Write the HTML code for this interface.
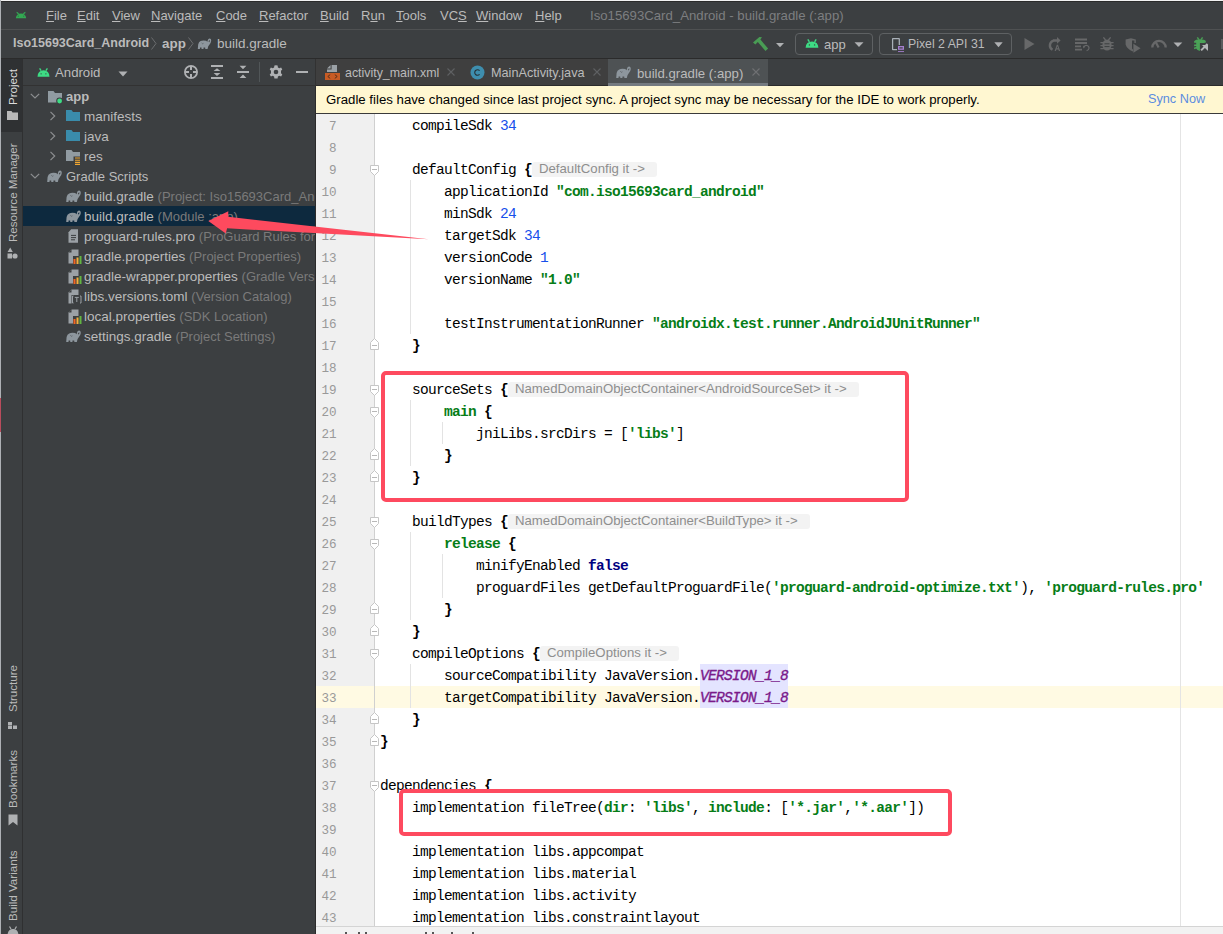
<!DOCTYPE html>
<html><head><meta charset="utf-8">
<style>
*{margin:0;padding:0;box-sizing:border-box}
html,body{width:1223px;height:934px;overflow:hidden;background:#3c3f41;font-family:"Liberation Sans",sans-serif;position:relative}
.a{position:absolute}
.t{position:absolute;white-space:nowrap;font-size:13px;line-height:15px;color:#bbbbbb}
.u{text-decoration:underline;text-underline-offset:1px}
svg{position:absolute;overflow:visible}
/* editor */
#ed{position:absolute;left:316px;top:114px;width:907px;height:812px;background:#fff;overflow:hidden}
#gut{position:absolute;left:0;top:0;width:58px;height:812px;background:#f0f0f0}
#gl{position:absolute;left:58px;top:0;width:1px;height:812px;background:#d0d0d0}
.ln{position:absolute;left:0;width:20.5px;margin-top:2px;text-align:right;font-family:"Liberation Mono",monospace;font-size:12.6px;line-height:22px;color:#999999}
.cl{position:absolute;left:64px;white-space:pre;font-family:"Liberation Mono",monospace;font-size:14.5px;letter-spacing:-0.7px;line-height:22px;color:#000;margin-top:1px}
.s{color:#067d17;font-weight:bold}
.n{color:#1750eb}
.k{color:#000080;font-weight:bold}
.f{color:#7a1a8a;font-style:italic;-webkit-text-stroke:0.35px #7a1a8a}
.h{position:absolute;height:15px;background:#f3f3f3;border-radius:3px;font-family:"Liberation Sans",sans-serif;font-size:13.2px;line-height:13px;color:#8e8e8e;padding-left:7px;padding-right:12px;white-space:nowrap}
</style></head><body>
<svg width="0" height="0" style="position:absolute"><defs>
<symbol id="ele" viewBox="0 0 15 12"><path d="M0.2 12 L0.6 7 Q1.2 4.2 3.2 3.4 Q5.6 2.4 9.2 3.1 L10.6 4.2 Q11 2.6 11.4 1.6 Q12.4 0.4 13.4 0.5 Q15 1 14.8 3 Q14.6 5.6 12.6 7.6 L11.6 9 L10.8 12 L8.4 12 L8.2 10.4 L6.5 10.4 L6.4 12 L4.3 12 L4.2 10.4 L2.6 10.4 L2.5 12 Z M11.9 3.9 Q12.3 2.4 13.5 2.5 Q13.3 3.8 12.7 4.5 Z" fill="#8d969d" fill-rule="evenodd"/><path d="M4.4 5.4 Q5.3 6.9 6.4 5.8" stroke="#5a6065" stroke-width="0.9" fill="none"/></symbol>
<symbol id="pg" viewBox="0 0 14 15"><path d="M0.5 3.5 L3.5 0.5 H10.5 V14.5 H0.5 Z" fill="#9ba1a6"/><path d="M0.5 3.5 H3.5 V0.5" fill="#3c3f41"/><path d="M0 3.3 L3.3 0" stroke="#3c3f41" stroke-width="0.9"/></symbol>
<symbol id="props" viewBox="0 0 14 15"><use href="#pg"/><rect x="5" y="7" width="9" height="8" fill="#3c3f41"/><rect x="5.5" y="10" width="2" height="5" fill="#f26522"/><rect x="8.5" y="8.5" width="2" height="6.5" fill="#f4af3d"/><rect x="11.5" y="7" width="2" height="8" fill="#62b543"/></symbol>
<symbol id="chevd" viewBox="0 0 10 6"><path d="M0.8 0.8 L5 5 L9.2 0.8" fill="none" stroke="#8c8e90" stroke-width="1.2"/></symbol>
<symbol id="chevr" viewBox="0 0 6 10"><path d="M0.5 0.8 L4.7 5 L0.5 9.2" fill="none" stroke="#8c8e90" stroke-width="1.2"/></symbol>
</defs></svg>
<!-- outer frame -->
<div class="a" style="left:0;top:0;width:1223px;height:1px;background:#f2f2f2"></div>
<div class="a" style="left:0;top:1px;width:1223px;height:1px;background:#2b2b2b"></div>
<div class="a" style="left:0;top:0;width:1px;height:934px;background:#aeb1b5"></div>
<!-- menu separator -->
<div class="a" style="left:1px;top:29px;width:1222px;height:1px;background:#4f5152"></div>
<div class="a" style="left:1px;top:58px;width:1222px;height:1px;background:#2b2b2b"></div>


<!-- menu bar -->
<svg style="left:15px;top:12px" width="12" height="7" viewBox="0 0 12 7"><path d="M1.6 0.4 Q2.8 0.6 3.6 2.2 M10.4 0.4 Q9.2 0.6 8.4 2.2" stroke="#34a853" stroke-width="1.3" fill="none"/><path d="M0.8 6.2 Q1.6 1.6 6 1.6 Q10.4 1.6 11.2 6.2 Z" fill="#34a853"/><path d="M3.3 3.6 V4.8 M8.7 3.6 V4.8" stroke="#2a6e3c" stroke-width="0.8"/></svg>
<div class="t" style="left:46px;top:8px"><span class="u">F</span>ile</div>
<div class="t" style="left:77px;top:8px"><span class="u">E</span>dit</div>
<div class="t" style="left:112px;top:8px"><span class="u">V</span>iew</div>
<div class="t" style="left:151px;top:8px"><span class="u">N</span>avigate</div>
<div class="t" style="left:216px;top:8px"><span class="u">C</span>ode</div>
<div class="t" style="left:259px;top:8px"><span class="u">R</span>efactor</div>
<div class="t" style="left:320px;top:8px"><span class="u">B</span>uild</div>
<div class="t" style="left:361px;top:8px">R<span class="u">u</span>n</div>
<div class="t" style="left:396px;top:8px"><span class="u">T</span>ools</div>
<div class="t" style="left:440px;top:8px">VC<span class="u">S</span></div>
<div class="t" style="left:476px;top:8px"><span class="u">W</span>indow</div>
<div class="t" style="left:535px;top:8px"><span class="u">H</span>elp</div>
<div class="t" style="left:590px;top:8px;color:#7c7e80;font-size:13.2px">Iso15693Card_Android - build.gradle (:app)</div>
<!-- breadcrumb / toolbar -->
<div class="t" style="left:13px;top:36px;font-weight:bold;font-size:12.5px;color:#bbbbbb">Iso15693Card_Android</div>
<svg style="left:151px;top:37px" width="6" height="13" viewBox="0 0 6 13"><path d="M0.5 0.5 L5 6.5 L0.5 12.5" fill="none" stroke="#6b6d6f" stroke-width="1"/></svg>
<div class="t" style="left:162px;top:36px;font-weight:bold;font-size:13.4px;color:#bbbbbb">app</div>
<svg style="left:188px;top:37px" width="6" height="13" viewBox="0 0 6 13"><path d="M0.5 0.5 L5 6.5 L0.5 12.5" fill="none" stroke="#6b6d6f" stroke-width="1"/></svg>
<svg style="left:197px;top:38px" width="15" height="11" viewBox="0 0 15 11" class="eleph"><use href="#ele"/></svg>
<div class="t" style="left:217px;top:36px;color:#bbbbbb;font-size:13.5px">build.gradle</div>

<!-- toolbar right -->
<svg style="left:752px;top:36px" width="17" height="15" viewBox="0 0 17 15"><path d="M1 6.5 L7.4 0.9 L10 1.2 L8.4 3.6 L16.1 12.4 L13.5 15 L5.8 6 L3.4 8.4 Z" fill="#499c54"/></svg>
<svg style="left:775px;top:42px" width="10" height="6" viewBox="0 0 10 6"><path d="M1 1 H9 L5 5.2 Z" fill="#afb1b3"/></svg>
<div class="a" style="left:795px;top:33px;width:78px;height:22px;border:1px solid #5e6163;border-radius:4px"></div>
<svg style="left:805px;top:39px" width="14" height="9" viewBox="0 0 14 9"><path d="M2.8 0.4 L4.4 2.8 M11.2 0.4 L9.6 2.8" stroke="#3ddc84" stroke-width="1.4"/><path d="M0.6 8.8 Q1 2.4 7 2.4 Q13 2.4 13.4 8.8 Z" fill="#3ddc84"/><circle cx="4.4" cy="5.9" r="0.7" fill="#3c3f41"/><circle cx="9.6" cy="5.9" r="0.7" fill="#3c3f41"/></svg>
<div class="t" style="left:824px;top:37px;font-size:13px">app</div>
<svg style="left:854px;top:42px" width="10" height="5" viewBox="0 0 10 5"><path d="M0.5 0.3 H9.5 L5 5 Z" fill="#afb1b3"/></svg>
<div class="a" style="left:879px;top:33px;width:133px;height:22px;border:1px solid #5e6163;border-radius:4px"></div>
<svg style="left:886px;top:34px" width="24" height="20" viewBox="0 0 24 20"><path d="M13.3 11 V5 Q13.3 4.7 13 4.7 H6.9 Q6.6 4.7 6.6 5 V15.2 Q6.6 15.6 6.9 15.6 H11" fill="none" stroke="#a9b1b8" stroke-width="1.25"/><rect x="12.65" y="12.65" width="4.7" height="2.5" fill="none" stroke="#a57fcf" stroke-width="1.3"/><path d="M12 17.55 H18" stroke="#a57fcf" stroke-width="0.9"/></svg>
<div class="t" style="left:908px;top:37px;font-size:12.3px">Pixel 2 API 31</div>
<svg style="left:994px;top:42px" width="9" height="6" viewBox="0 0 9 6"><path d="M0.3 0.3 H8.7 L4.5 5.2 Z" fill="#afb1b3"/></svg>
<svg style="left:1024px;top:38px" width="11" height="12" viewBox="0 0 11 12"><path d="M0.5 0 V12 L10.5 6 Z" fill="#676869"/></svg>
<svg style="left:1047px;top:37px" width="15" height="15" viewBox="0 0 15 15"><path d="M6.5 3.6 A5 5 0 0 0 5.5 12.8" fill="none" stroke="#676869" stroke-width="2.4"/><path d="M6 2.2 H10 V0 L13.6 3.4 L10 6.8 V4.8 H6 Z" fill="#676869"/><path d="M7.6 14 L9.8 7.8 H11 L13.2 14 H11.9 L11.4 12.4 H9.4 L8.9 14 Z M9.7 11.3 H11.1 L10.4 9.2 Z" fill="#676869"/></svg>
<svg style="left:1074px;top:38px" width="16" height="14" viewBox="0 0 16 14"><path d="M1 1.5 H13 M1 5 H13 M1 8.3 H7 M1 11.6 H8" stroke="#676869" stroke-width="1.8"/><path d="M10 9 A2.6 2.6 0 1 1 12.6 12.6" fill="none" stroke="#676869" stroke-width="1.2"/><path d="M9 7.6 L11.3 8.8 L9.3 10.6 Z" fill="#676869"/></svg>
<svg style="left:1100px;top:37px" width="14" height="14" viewBox="0 0 14 14"><path d="M3.4 0.4 L5.6 3 M10.6 0.4 L8.4 3" stroke="#676869" stroke-width="1.3"/><ellipse cx="7" cy="8" rx="4.6" ry="5.6" fill="#676869"/><path d="M0.4 5.6 H13.6 M0.4 8.6 H13.6 M0.4 11.6 H13.6" stroke="#676869" stroke-width="1.3"/><path d="M4.5 6.8 H9.5 M4.5 9.6 H9.5" stroke="#3c3f41" stroke-width="1"/></svg>
<svg style="left:1125px;top:38px" width="17" height="15" viewBox="0 0 17 15"><path d="M0.6 1.4 L6 0.2 L10.8 1.4 V5 H9.4 V2.6 H7 V10.6 Q7.4 11 8 11.4 V13.4 Q2 11.4 0.6 6.6 Z" fill="#676869"/><path d="M8.4 5.8 V14.8 L15.6 10.3 Z" fill="#676869"/></svg>
<svg style="left:1151px;top:38px" width="16" height="10" viewBox="0 0 16 10"><path d="M1.3 9.6 A6.7 6.7 0 0 1 14.7 9.6" fill="none" stroke="#676869" stroke-width="2.3"/><path d="M4.8 4.2 L7.6 9.6" stroke="#676869" stroke-width="2.2"/></svg>
<svg style="left:1173px;top:42px" width="10" height="6" viewBox="0 0 10 6"><path d="M0.5 0.6 H9.3 L4.9 5 Z" fill="#afb1b3"/></svg>
<svg style="left:1190px;top:34px" width="24" height="20" viewBox="0 0 24 20"><path d="M7.3 3.4 L9 5.6 M12.6 3.4 L11 5.6" stroke="#499c54" stroke-width="1.5"/><path d="M4.1 7.2 Q5.5 5.2 10 5.2 Q14.5 5.2 15.8 7 V8.6 L14 9 L9.9 9 V16.9 Q7 16.6 6.2 14.6 L4.1 15.2 V13.6 L6.2 13 V12 L4.1 12.2 V10.6 L6.2 10.4 V8.8 L4.1 8.8 Z" fill="#4aa257"/><path d="M11.1 16.4 L17.5 10" stroke="#b4b6b8" stroke-width="2"/><path d="M12 10.9 H18 V16.9 Z" fill="#b4b6b8"/></svg>
<div class="a" style="left:1221px;top:39px;width:2px;height:10px;background:#5a5c5e"></div>

<!-- left tool strip -->
<div class="a" style="left:1px;top:59px;width:21px;height:875px;background:#3c3f41"></div>
<div class="a" style="left:22px;top:59px;width:1px;height:875px;background:#2f3031"></div>
<div class="a" style="left:0;top:398px;width:1px;height:34px;background:#b94c5c"></div>
<div class="a" style="left:1px;top:59px;width:21px;height:73px;background:#2f3133"></div>
<div class="t" style="left:5px;top:104.6px;font-size:11.6px;color:#dcdcdc;transform:rotate(-90deg);transform-origin:0 0">Project</div>
<svg style="left:7px;top:111px" width="11" height="9" viewBox="0 0 11 9"><path d="M0 0 H4.5 L5.5 1.5 H11 V9 H0 Z" fill="#b9b9b9"/></svg>
<div class="t" style="left:5px;top:241.5px;font-size:11.6px;color:#bbbbbb;transform:rotate(-90deg);transform-origin:0 0">Resource Manager</div>
<svg style="left:7px;top:247px" width="11" height="12" viewBox="0 0 11 12"><path d="M3.2 0.5 L5.8 5 H0.6 Z" fill="#afb1b3"/><rect x="0.5" y="6.5" width="4.5" height="5" fill="#afb1b3"/><circle cx="8" cy="9" r="2.6" fill="#afb1b3"/></svg>
<div class="t" style="left:5px;top:712.3px;font-size:11.6px;color:#bbbbbb;transform:rotate(-90deg);transform-origin:0 0">Structure</div>
<svg style="left:8px;top:722px" width="10" height="7" viewBox="0 0 10 7"><rect x="0" y="0" width="4" height="3" fill="#afb1b3"/><rect x="5" y="3.5" width="4" height="3.5" fill="#afb1b3"/><rect x="0" y="3.5" width="4" height="3.5" fill="#afb1b3"/></svg>
<div class="t" style="left:5px;top:808.4px;font-size:11.6px;color:#bbbbbb;transform:rotate(-90deg);transform-origin:0 0">Bookmarks</div>
<svg style="left:8px;top:814px" width="10" height="12" viewBox="0 0 10 12"><path d="M0.5 0.5 H9.5 V11.5 L5 8 L0.5 11.5 Z" fill="#afb1b3"/></svg>
<div class="t" style="left:5px;top:920.6px;font-size:11.6px;color:#bbbbbb;transform:rotate(-90deg);transform-origin:0 0">Build Variants</div>
<svg style="left:7px;top:926px" width="12" height="9" viewBox="0 0 12 9"><path d="M2.5 0.5 L4 3 M9.5 0.5 L8 3" stroke="#afb1b3" stroke-width="1.2"/><path d="M0.5 9 Q1 3 6 3 Q11 3 11.5 9 Z" fill="#afb1b3"/></svg>
<!-- project panel -->
<div class="a" style="left:23px;top:85px;width:293px;height:1px;background:#323232"></div>
<svg style="left:37px;top:68px" width="13" height="9" viewBox="0 0 13 9"><path d="M2.6 0.4 L4.1 2.6 M10.4 0.4 L8.9 2.6" stroke="#3ddc84" stroke-width="1.3"/><path d="M0.5 8.8 Q0.9 2.3 6.5 2.3 Q12.1 2.3 12.5 8.8 Z" fill="#3ddc84"/><circle cx="4.1" cy="5.8" r="0.65" fill="#3c3f41"/><circle cx="8.9" cy="5.8" r="0.65" fill="#3c3f41"/></svg>
<div class="t" style="left:55px;top:65px;font-size:13.2px">Android</div>
<svg style="left:118px;top:70.5px" width="10" height="6" viewBox="0 0 10 6"><path d="M0.5 0.5 H9.5 L5 5.5 Z" fill="#afb1b3"/></svg>
<svg style="left:0;top:0" width="260" height="90" viewBox="0 0 260 90"><circle cx="191" cy="72" r="6.1" fill="none" stroke="#afb1b3" stroke-width="1.8"/><path d="M191 66 V70 M191 74 V78 M185 72 H189 M193 72 H197" stroke="#afb1b3" stroke-width="2"/><path d="M211 66 H223 M211 78 H223 M237 72 H249" stroke="#afb1b3" stroke-width="2.1"/><path d="M217 68.2 L220.4 71.1 H213.6 Z M217 76 L220.4 73 H213.6 Z M243 69.3 L246.4 65.8 H239.6 Z M243 74.6 L246.4 78.1 H239.6 Z" fill="#afb1b3"/></svg>
<div class="a" style="left:259px;top:62px;width:1px;height:20px;background:#515658"></div>
<svg style="left:269px;top:65px" width="14" height="14" viewBox="0 0 14 14"><path d="M7 0.3 L8.6 0.6 L8.9 2.4 L10.4 3.3 L12.1 2.6 L13.3 4.4 L12 5.7 V8.3 L13.3 9.6 L12.1 11.4 L10.4 10.7 L8.9 11.6 L8.6 13.4 H5.4 L5.1 11.6 L3.6 10.7 L1.9 11.4 L0.7 9.6 L2 8.3 V5.7 L0.7 4.4 L1.9 2.6 L3.6 3.3 L5.1 2.4 L5.4 0.6 Z" fill="#afb1b3"/><circle cx="7" cy="7" r="2.3" fill="#3c3f41"/></svg>
<div class="a" style="left:296px;top:71px;width:12px;height:2px;background:#afb1b3"></div>

<!-- tree -->
<div class="a" style="left:23px;top:206px;width:293px;height:20px;background:#0d293e"></div>
<svg style="left:30px;top:93px" width="10" height="6"><use href="#chevd" width="10" height="6"/></svg>
<svg style="left:48px;top:91px" width="15" height="13" viewBox="0 0 15 13"><path d="M0 0 H5.5 L7 2 H14 V11.5 H0 Z" fill="#919ba2"/><circle cx="11.6" cy="10" r="3.4" fill="#3c3f41"/><circle cx="11.6" cy="10" r="2.4" fill="#3ddc84"/></svg>
<div class="t" style="left:66px;top:89px;font-weight:bold;font-size:13px">app</div>
<svg style="left:50px;top:111px" width="6" height="10"><use href="#chevr" width="6" height="10"/></svg>
<svg style="left:66px;top:110px" width="15" height="12" viewBox="0 0 15 12"><path d="M0 0 H5.5 L7 2 H14 V11 H0 Z" fill="#3a8cab"/></svg>
<div class="t" style="left:84px;top:109px;font-size:13.5px">manifests</div>
<svg style="left:50px;top:131px" width="6" height="10"><use href="#chevr" width="6" height="10"/></svg>
<svg style="left:66px;top:130px" width="15" height="12" viewBox="0 0 15 12"><path d="M0 0 H5.5 L7 2 H14 V11 H0 Z" fill="#3a8cab"/></svg>
<div class="t" style="left:84px;top:129px;font-size:13.5px">java</div>
<svg style="left:50px;top:151px" width="6" height="10"><use href="#chevr" width="6" height="10"/></svg>
<svg style="left:66px;top:150px" width="15" height="15" viewBox="0 0 15 15"><path d="M0 0 H5.5 L7 2 H14 V11 H0 Z" fill="#919ba2"/><rect x="7.5" y="6.5" width="7.5" height="8.5" fill="#3c3f41"/><path d="M9 8 H14 M9 10.2 H14 M9 12.4 H14 M9 14.4 H14" stroke="#f0a732" stroke-width="1.1"/></svg>
<div class="t" style="left:84px;top:149px;font-size:13.5px">res</div>
<svg style="left:30px;top:173px" width="10" height="6"><use href="#chevd" width="10" height="6"/></svg>
<svg style="left:47px;top:170px" width="15" height="12"><use href="#ele" width="15" height="12"/></svg>
<div class="t" style="left:66px;top:169px;font-size:13px">Gradle Scripts</div>
<svg style="left:66px;top:190px" width="15" height="12"><use href="#ele" width="15" height="12"/></svg>
<div class="t" style="left:84px;top:189px;font-size:13.5px">build.gradle <span style="color:#7a7a7a;font-size:13px">(Project: Iso15693Card_Android)</span></div>
<svg style="left:66px;top:210px" width="15" height="12"><use href="#ele" width="15" height="12"/></svg>
<div class="t" style="left:84px;top:209px;font-size:13.5px">build.gradle <span style="color:#7a7a7a;font-size:13px">(Module :app)</span></div>
<svg style="left:68px;top:229px" width="14" height="15" viewBox="0 0 14 15"><path d="M0.5 3.2 L3.2 0.3 H10 V13.8 H0.5 Z" fill="#9ba1a6"/><path d="M3 6.4 H8 M3 8.6 H8 M3 10.8 H7" stroke="#3c3f41" stroke-width="1"/></svg>
<div class="t" style="left:84px;top:229px;font-size:13.5px">proguard-rules.pro <span style="color:#7a7a7a;font-size:13px">(ProGuard Rules for ":app")</span></div>
<svg style="left:68px;top:249px" width="14" height="15"><use href="#props" width="14" height="15"/></svg>
<div class="t" style="left:84px;top:249px;font-size:13.5px">gradle.properties <span style="color:#7a7a7a;font-size:13px">(Project Properties)</span></div>
<svg style="left:68px;top:269px" width="14" height="15"><use href="#props" width="14" height="15"/></svg>
<div class="t" style="left:84px;top:269px;font-size:13.5px">gradle-wrapper.properties <span style="color:#7a7a7a;font-size:13px">(Gradle Version)</span></div>
<svg style="left:68px;top:289px" width="14" height="15" viewBox="0 0 14 15"><path d="M0.5 3.5 L3.5 0.5 H10.5 V14.5 H0.5 Z" fill="#9ba1a6"/><path d="M0.5 3.5 H3.5 V0.5" fill="#3c3f41"/><rect x="3.5" y="6" width="10.5" height="9" fill="#3c3f41"/><path d="M5.5 7 H4.5 V14 H5.5 M12 7 H13 V14 H12 M6.8 8.4 H10.8 M8.8 8.4 V13" fill="none" stroke="#9ba1a6" stroke-width="1"/></svg>
<div class="t" style="left:84px;top:289px;font-size:13.5px">libs.versions.toml <span style="color:#7a7a7a;font-size:13px">(Version Catalog)</span></div>
<svg style="left:68px;top:309px" width="14" height="15"><use href="#props" width="14" height="15"/></svg>
<div class="t" style="left:84px;top:309px;font-size:13.5px">local.properties <span style="color:#7a7a7a;font-size:13px">(SDK Location)</span></div>
<svg style="left:66px;top:330px" width="15" height="12"><use href="#ele" width="15" height="12"/></svg>
<div class="t" style="left:84px;top:329px;font-size:13.5px">settings.gradle <span style="color:#7a7a7a;font-size:13px">(Project Settings)</span></div>

<div class="a" style="left:315px;top:59px;width:1px;height:875px;background:#2b2b2b"></div>
<!-- editor tabs -->
<div class="a" style="left:316px;top:59px;width:907px;height:27px;background:#3c3f41"></div>
<div class="a" style="left:316px;top:59px;width:292px;height:27px;background:#3f3f3f"></div>
<div class="a" style="left:315px;top:59px;width:1px;height:27px;background:#323232"></div>
<div class="a" style="left:316px;top:85px;width:907px;height:1px;background:#2b2b2b"></div>
<svg style="left:0;top:0" width="345" height="85" viewBox="0 0 345 85"><path d="M327 68.6 L330.6 65 V68.6 Z M331.6 65 H337 V72 H327 V69.6 H331.6 Z" fill="#9ba1a6"/><rect x="325" y="73" width="15" height="7" fill="#c75b24"/><path d="M330.2 74.6 L327.8 76.5 L330.2 78.4 M334.8 74.6 L337.2 76.5 L334.8 78.4" fill="none" stroke="#4a2a1a" stroke-width="0.9"/></svg>
<div class="t" style="left:345px;top:66px;font-size:12.4px">activity_main.xml</div>
<svg style="left:447px;top:68px" width="8" height="8" viewBox="0 0 8 8"><path d="M0.5 0.5 L7.5 7.5 M7.5 0.5 L0.5 7.5" stroke="#5f6163" stroke-width="1.1"/></svg>
<svg style="left:470px;top:65px" width="15" height="15" viewBox="0 0 15 15"><circle cx="7.5" cy="7.5" r="7" fill="#3e8eae"/><path d="M9.6 5.6 A2.8 2.8 0 1 0 9.6 9.4" fill="none" stroke="#263238" stroke-width="1.1"/></svg>
<div class="t" style="left:491px;top:66px;font-size:12.7px">MainActivity.java</div>
<svg style="left:593px;top:68px" width="8" height="8" viewBox="0 0 8 8"><path d="M0.5 0.5 L7.5 7.5 M7.5 0.5 L0.5 7.5" stroke="#5f6163" stroke-width="1.1"/></svg>
<div class="a" style="left:608px;top:59px;width:160px;height:27px;background:#4e5254"></div>
<div class="a" style="left:608px;top:83px;width:160px;height:3px;background:#747a80"></div>
<svg style="left:616px;top:66px" width="15" height="12"><use href="#ele" width="15" height="12"/></svg>
<div class="t" style="left:637px;top:66px;font-size:13.2px">build.gradle (:app)</div>
<svg style="left:752px;top:68px" width="8" height="8" viewBox="0 0 8 8"><path d="M0.5 0.5 L7.5 7.5 M7.5 0.5 L0.5 7.5" stroke="#6f7173" stroke-width="1.1"/></svg>
<!-- banner -->
<div class="a" style="left:316px;top:86px;width:907px;height:27px;background:#fff7d1"></div>
<div class="a" style="left:316px;top:113px;width:907px;height:1px;background:#3a3a3a"></div>
<div class="t" style="left:326px;top:92px;font-size:13.22px;color:#000">Gradle files have changed since last project sync. A project sync may be necessary for the IDE to work properly.</div>
<div class="t" style="left:1148px;top:92px;font-size:12.7px;color:#5b8ce0">Sync Now</div>

<!-- EDITOR -->
<div id="ed">
<div class="a" style="left:0;top:572px;width:907px;height:22px;background:#fffae3"></div>
<div id="gut"></div>
<div class="a" style="left:0;top:572px;width:58px;height:22px;background:#fffae3"></div>
<div id="gl"></div>
<div class="a" style="left:864px;top:0;width:1px;height:812px;background:#e4e4e4"></div>
<div class="a" style="left:384px;top:550px;width:88px;height:44px;background:#e4e4ff"></div>
<div class="a" style="left:94px;top:66px;width:1px;height:154px;background:#e3e3e3"></div>
<div class="a" style="left:94px;top:286px;width:1px;height:66px;background:#e3e3e3"></div>
<div class="a" style="left:126px;top:308px;width:1px;height:22px;background:#e3e3e3"></div>
<div class="a" style="left:94px;top:418px;width:1px;height:88px;background:#e3e3e3"></div>
<div class="a" style="left:126px;top:440px;width:1px;height:44px;background:#e3e3e3"></div>
<div class="a" style="left:94px;top:550px;width:1px;height:44px;background:#e3e3e3"></div>
<div class="ln" style="top:0px">7</div>
<div class="cl" style="top:0px">    compileSdk <span class="n">34</span></div>
<div class="ln" style="top:22px">8</div>
<div class="ln" style="top:44px">9</div>
<div class="cl" style="top:44px">    defaultConfig <b>{</b></div>
<div class="h" style="left:216px;top:48px">DefaultConfig it -&gt;</div>
<div class="ln" style="top:66px">10</div>
<div class="cl" style="top:66px">        applicationId <span class="s">&quot;com.iso15693card_android&quot;</span></div>
<div class="ln" style="top:88px">11</div>
<div class="cl" style="top:88px">        minSdk <span class="n">24</span></div>
<div class="ln" style="top:110px">12</div>
<div class="cl" style="top:110px">        targetSdk <span class="n">34</span></div>
<div class="ln" style="top:132px">13</div>
<div class="cl" style="top:132px">        versionCode <span class="n">1</span></div>
<div class="ln" style="top:154px">14</div>
<div class="cl" style="top:154px">        versionName <span class="s">&quot;1.0&quot;</span></div>
<div class="ln" style="top:176px">15</div>
<div class="ln" style="top:198px">16</div>
<div class="cl" style="top:198px">        testInstrumentationRunner <span class="s">&quot;androidx.test.runner.AndroidJUnitRunner&quot;</span></div>
<div class="ln" style="top:220px">17</div>
<div class="cl" style="top:220px">    <b>}</b></div>
<div class="ln" style="top:242px">18</div>
<div class="ln" style="top:264px">19</div>
<div class="cl" style="top:264px">    sourceSets <b>{</b></div>
<div class="h" style="left:192px;top:268px">NamedDomainObjectContainer&lt;AndroidSourceSet&gt; it -&gt;</div>
<div class="ln" style="top:286px">20</div>
<div class="cl" style="top:286px">        <span class="s">main</span> <b>{</b></div>
<div class="ln" style="top:308px">21</div>
<div class="cl" style="top:308px">            jniLibs.srcDirs = [<span class="s">&#x27;libs&#x27;</span>]</div>
<div class="ln" style="top:330px">22</div>
<div class="cl" style="top:330px">        <b>}</b></div>
<div class="ln" style="top:352px">23</div>
<div class="cl" style="top:352px">    <b>}</b></div>
<div class="ln" style="top:374px">24</div>
<div class="ln" style="top:396px">25</div>
<div class="cl" style="top:396px">    buildTypes <b>{</b></div>
<div class="h" style="left:192px;top:400px">NamedDomainObjectContainer&lt;BuildType&gt; it -&gt;</div>
<div class="ln" style="top:418px">26</div>
<div class="cl" style="top:418px">        <span class="s">release</span> <b>{</b></div>
<div class="ln" style="top:440px">27</div>
<div class="cl" style="top:440px">            minifyEnabled <span class="k">false</span></div>
<div class="ln" style="top:462px">28</div>
<div class="cl" style="top:462px">            proguardFiles getDefaultProguardFile(<span class="s">&#x27;proguard-android-optimize.txt&#x27;</span>), <span class="s">&#x27;proguard-rules.pro&#x27;</span></div>
<div class="ln" style="top:484px">29</div>
<div class="cl" style="top:484px">        <b>}</b></div>
<div class="ln" style="top:506px">30</div>
<div class="cl" style="top:506px">    <b>}</b></div>
<div class="ln" style="top:528px">31</div>
<div class="cl" style="top:528px">    compileOptions <b>{</b></div>
<div class="h" style="left:224px;top:532px">CompileOptions it -&gt;</div>
<div class="ln" style="top:550px">32</div>
<div class="cl" style="top:550px">        sourceCompatibility JavaVersion.<span class="f">VERSION_1_8</span></div>
<div class="ln" style="top:572px">33</div>
<div class="cl" style="top:572px">        targetCompatibility JavaVersion.<span class="f">VERSION_1_8</span></div>
<div class="ln" style="top:594px">34</div>
<div class="cl" style="top:594px">    <b>}</b></div>
<div class="ln" style="top:616px">35</div>
<div class="cl" style="top:616px"><b>}</b></div>
<div class="ln" style="top:638px">36</div>
<div class="ln" style="top:660px">37</div>
<div class="cl" style="top:660px">dependencies <b>{</b></div>
<div class="ln" style="top:682px">38</div>
<div class="cl" style="top:682px">    implementation fileTree(<span class="s">dir</span>: <span class="s">&#x27;libs&#x27;</span>, <span class="s">include</span>: [<span class="s">&#x27;*.jar&#x27;</span>,<span class="s">&#x27;*.aar&#x27;</span>])</div>
<div class="ln" style="top:704px">39</div>
<div class="ln" style="top:726px">40</div>
<div class="cl" style="top:726px">    implementation libs.appcompat</div>
<div class="ln" style="top:748px">41</div>
<div class="cl" style="top:748px">    implementation libs.material</div>
<div class="ln" style="top:770px">42</div>
<div class="cl" style="top:770px">    implementation libs.activity</div>
<div class="ln" style="top:792px">43</div>
<div class="cl" style="top:792px">    implementation libs.constraintlayout</div>
<svg style="left:53px;top:51px" width="11" height="12" viewBox="0 0 11 12"><path d="M1.5 0.5 H9.5 V6.5 L5.5 10.5 L1.5 6.5 Z" fill="#fff" stroke="#c6c6c6"/><path d="M3 4.5 H8" stroke="#b8b8b8"/></svg>
<svg style="left:53px;top:271px" width="11" height="12" viewBox="0 0 11 12"><path d="M1.5 0.5 H9.5 V6.5 L5.5 10.5 L1.5 6.5 Z" fill="#fff" stroke="#c6c6c6"/><path d="M3 4.5 H8" stroke="#b8b8b8"/></svg>
<svg style="left:53px;top:293px" width="11" height="12" viewBox="0 0 11 12"><path d="M1.5 0.5 H9.5 V6.5 L5.5 10.5 L1.5 6.5 Z" fill="#fff" stroke="#c6c6c6"/><path d="M3 4.5 H8" stroke="#b8b8b8"/></svg>
<svg style="left:53px;top:403px" width="11" height="12" viewBox="0 0 11 12"><path d="M1.5 0.5 H9.5 V6.5 L5.5 10.5 L1.5 6.5 Z" fill="#fff" stroke="#c6c6c6"/><path d="M3 4.5 H8" stroke="#b8b8b8"/></svg>
<svg style="left:53px;top:425px" width="11" height="12" viewBox="0 0 11 12"><path d="M1.5 0.5 H9.5 V6.5 L5.5 10.5 L1.5 6.5 Z" fill="#fff" stroke="#c6c6c6"/><path d="M3 4.5 H8" stroke="#b8b8b8"/></svg>
<svg style="left:53px;top:535px" width="11" height="12" viewBox="0 0 11 12"><path d="M1.5 0.5 H9.5 V6.5 L5.5 10.5 L1.5 6.5 Z" fill="#fff" stroke="#c6c6c6"/><path d="M3 4.5 H8" stroke="#b8b8b8"/></svg>
<svg style="left:53px;top:667px" width="11" height="12" viewBox="0 0 11 12"><path d="M1.5 0.5 H9.5 V6.5 L5.5 10.5 L1.5 6.5 Z" fill="#fff" stroke="#c6c6c6"/><path d="M3 4.5 H8" stroke="#b8b8b8"/></svg>
<svg style="left:53px;top:224px" width="11" height="13" viewBox="0 0 11 13"><path d="M5.5 0.5 L9.5 4.5 V11.5 H1.5 V4.5 Z" fill="#fff" stroke="#c6c6c6"/><path d="M3 7.5 H8" stroke="#b8b8b8"/></svg>
<svg style="left:53px;top:334px" width="11" height="13" viewBox="0 0 11 13"><path d="M5.5 0.5 L9.5 4.5 V11.5 H1.5 V4.5 Z" fill="#fff" stroke="#c6c6c6"/><path d="M3 7.5 H8" stroke="#b8b8b8"/></svg>
<svg style="left:53px;top:356px" width="11" height="13" viewBox="0 0 11 13"><path d="M5.5 0.5 L9.5 4.5 V11.5 H1.5 V4.5 Z" fill="#fff" stroke="#c6c6c6"/><path d="M3 7.5 H8" stroke="#b8b8b8"/></svg>
<svg style="left:53px;top:488px" width="11" height="13" viewBox="0 0 11 13"><path d="M5.5 0.5 L9.5 4.5 V11.5 H1.5 V4.5 Z" fill="#fff" stroke="#c6c6c6"/><path d="M3 7.5 H8" stroke="#b8b8b8"/></svg>
<svg style="left:53px;top:510px" width="11" height="13" viewBox="0 0 11 13"><path d="M5.5 0.5 L9.5 4.5 V11.5 H1.5 V4.5 Z" fill="#fff" stroke="#c6c6c6"/><path d="M3 7.5 H8" stroke="#b8b8b8"/></svg>
<svg style="left:53px;top:598px" width="11" height="13" viewBox="0 0 11 13"><path d="M5.5 0.5 L9.5 4.5 V11.5 H1.5 V4.5 Z" fill="#fff" stroke="#c6c6c6"/><path d="M3 7.5 H8" stroke="#b8b8b8"/></svg>
<svg style="left:53px;top:620px" width="11" height="13" viewBox="0 0 11 13"><path d="M5.5 0.5 L9.5 4.5 V11.5 H1.5 V4.5 Z" fill="#fff" stroke="#c6c6c6"/><path d="M3 7.5 H8" stroke="#b8b8b8"/></svg>
</div>
<div class="a" style="left:316px;top:926px;width:907px;height:1px;background:#d4d4d4"></div>
<div class="a" style="left:316px;top:927px;width:907px;height:7px;background:#f2f2f2;overflow:hidden"><div class="a" style="left:29px;top:5px;width:2px;height:2px;background:#555"></div><div class="a" style="left:42px;top:5px;width:2px;height:2px;background:#555"></div><div class="a" style="left:49px;top:5px;width:2px;height:2px;background:#555"></div><div class="a" style="left:109px;top:5px;width:2px;height:2px;background:#555"></div><div class="a" style="left:116px;top:5px;width:2px;height:2px;background:#555"></div><div class="a" style="left:135px;top:5px;width:2px;height:2px;background:#555"></div><div class="a" style="left:156px;top:5px;width:2px;height:2px;background:#555"></div></div>
<!-- /EDITOR -->
<!-- ANN -->
<div class="a" style="left:381px;top:371px;width:528px;height:131px;border:4px solid #fe4a5f;border-radius:5px"></div>
<div class="a" style="left:399px;top:789px;width:553px;height:47px;border:4px solid #fe4a5f;border-radius:5px"></div>
<svg style="left:0;top:0" width="1223" height="934" viewBox="0 0 1223 934"><path d="M208.3 221 L228.3 211.2 L228.1 216.8 L428.6 239.3 L227.1 228.3 L225.8 233.4 Z" fill="#fe4a5e"/></svg>
<!-- /ANN -->

</body></html>
